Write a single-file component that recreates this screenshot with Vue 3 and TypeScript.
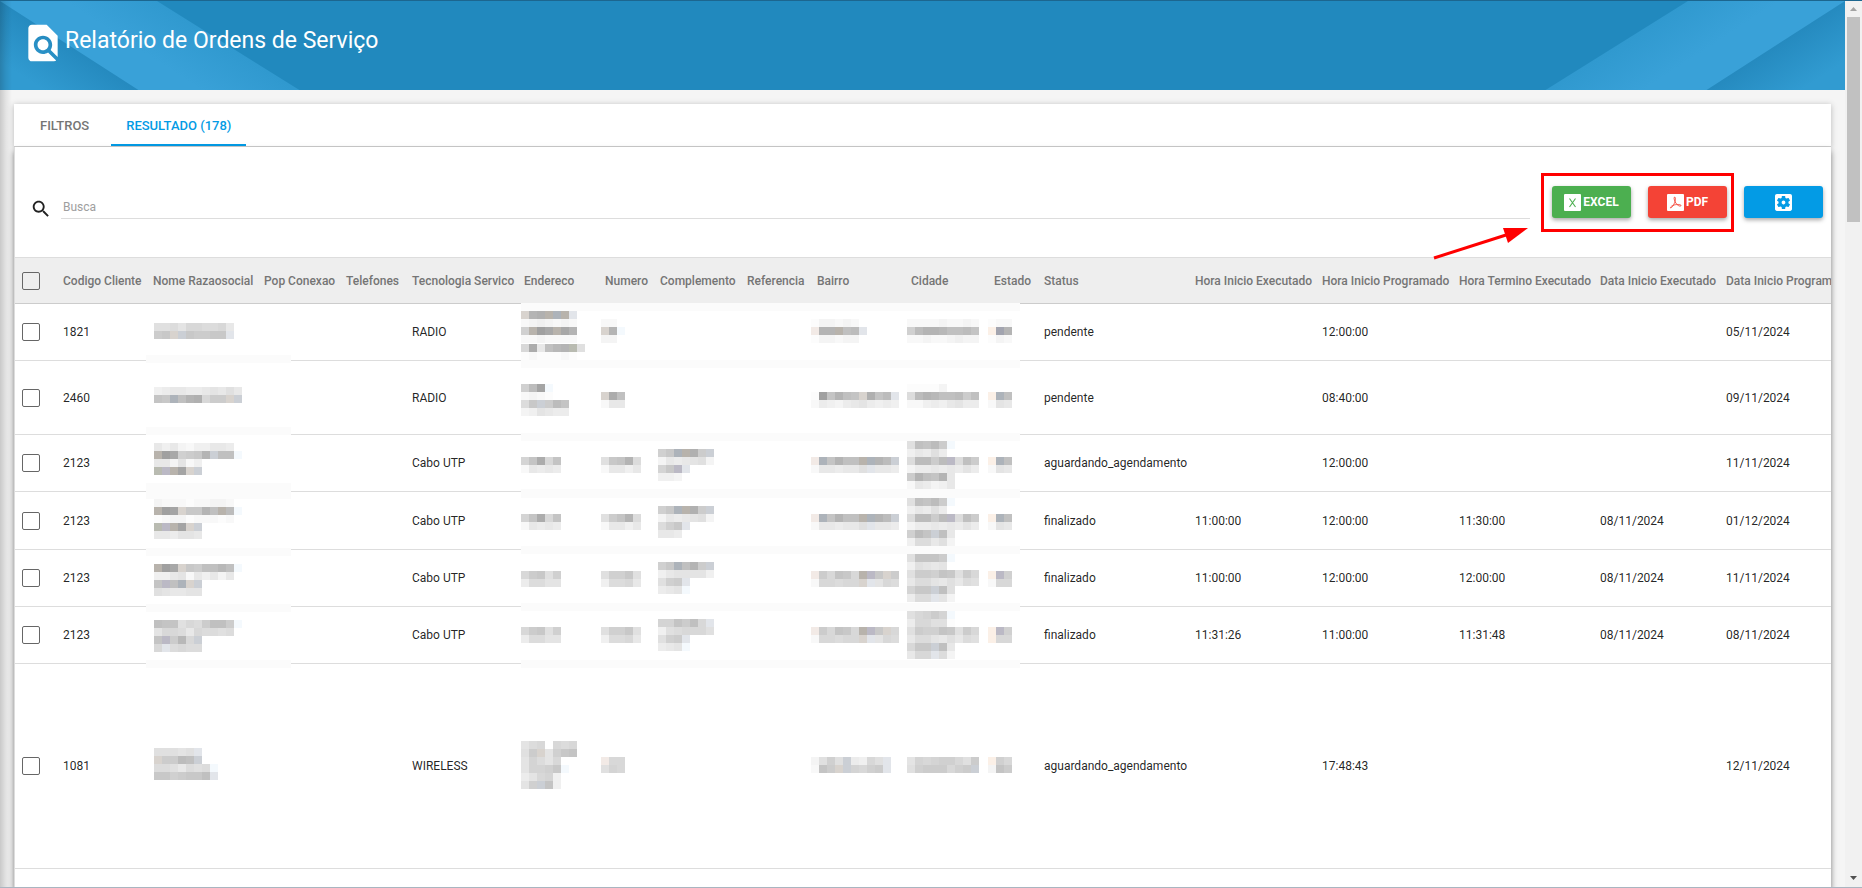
<script setup lang="ts">
import { ref } from 'vue'

interface Column { label: string; width: number }
interface Order {
  code: string
  tech: string
  status: string
  hourStart?: string
  hourPlanned: string
  hourEnd?: string
  dateStart?: string
  datePlanned: string
  size: string
}
interface Block { x: number; y: number; rows: string[] }

const tab = ref('resultado')
const query = ref('')

const columns: Column[] = [
  { label: 'Codigo Cliente', width: 90 },
  { label: 'Nome Razaosocial', width: 111 },
  { label: 'Pop Conexao', width: 82 },
  { label: 'Telefones', width: 66 },
  { label: 'Tecnologia Servico', width: 112 },
  { label: 'Endereco', width: 81 },
  { label: 'Numero', width: 55 },
  { label: 'Complemento', width: 87 },
  { label: 'Referencia', width: 70 },
  { label: 'Bairro', width: 94 },
  { label: 'Cidade', width: 83 },
  { label: 'Estado', width: 50 },
  { label: 'Status', width: 151 },
  { label: 'Hora Inicio Executado', width: 127 },
  { label: 'Hora Inicio Programado', width: 137 },
  { label: 'Hora Termino Executado', width: 141 },
  { label: 'Data Inicio Executado', width: 126 },
  { label: 'Data Inicio Programado', width: 141 },
]

const orders: Order[] = [
  { code: '1821', tech: 'RADIO', status: 'pendente', hourPlanned: '12:00:00', datePlanned: '05/11/2024', size: 'short' },
  { code: '2460', tech: 'RADIO', status: 'pendente', hourPlanned: '08:40:00', datePlanned: '09/11/2024', size: 'medium' },
  { code: '2123', tech: 'Cabo UTP', status: 'aguardando_agendamento', hourPlanned: '12:00:00', datePlanned: '11/11/2024', size: 'short' },
  { code: '2123', tech: 'Cabo UTP', status: 'finalizado', hourStart: '11:00:00', hourPlanned: '12:00:00', hourEnd: '11:30:00', dateStart: '08/11/2024', datePlanned: '01/12/2024', size: 'regular' },
  { code: '2123', tech: 'Cabo UTP', status: 'finalizado', hourStart: '11:00:00', hourPlanned: '12:00:00', hourEnd: '12:00:00', dateStart: '08/11/2024', datePlanned: '11/11/2024', size: 'short' },
  { code: '2123', tech: 'Cabo UTP', status: 'finalizado', hourStart: '11:31:26', hourPlanned: '11:00:00', hourEnd: '11:31:48', dateStart: '08/11/2024', datePlanned: '08/11/2024', size: 'short' },
  { code: '1081', tech: 'WIRELESS', status: 'aguardando_agendamento', hourPlanned: '17:48:43', datePlanned: '12/11/2024', size: 'tall' },
]

const cells = (o: Order): string[] => [
  o.code, '', '', '', o.tech, '', '', '', '', '', '', '', o.status,
  o.hourStart ?? '', o.hourPlanned, o.hourEnd ?? '', o.dateStart ?? '', o.datePlanned,
]

// Privacy mosaic: each letter is one 8px tile. Lower case runs from grey (a) to white (x);
// upper case letters are the tinted tiles.
const tints: Record<string, string> = {
  B: '#adb3ba', W: '#b8b3ac', R: '#f2eae6', L: '#f4f9fd', P: '#bbb9c5', G: '#b9bbb1',
  C: '#cbcfd5', D: '#d8d3ce', E: '#e2e5ea', F: '#fbf0e7', N: '#a2a4af',
}
const shade = (c: string): string => {
  if (tints[c]) return tints[c]
  const v = 160 + 4 * (c.charCodeAt(0) - 97)
  return `rgb(${v},${v},${v})`
}

const blocks: Block[] = [
  // Nome Razaosocial
  { x: 139, y: 66, rows: ['qqprooppos', 'lkDCkllkkE'] },
  { x: 139, y: 130, rows: ['utssttsrsqs', 'jkBifeollDC'] },
  { x: 139, y: 186, rows: ['susvwuusst', 'WacmlkfCiiL', 'ssvrwu', 'GPWbDC'] },
  { x: 139, y: 242, rows: ['vwwwxwwvvw', 'WabDkkfiWhL', 'xwvvxwwwxw', 'GPWbDC', 'sstrrs'] },
  { x: 139, y: 307, rows: ['WacDkliigiL', 'uusrwsusvs', 'jPiBDC', 'qrssrr'] },
  { x: 139, y: 363, rows: ['ijjqopliilL', 'roopsoppqp', 'jPlgoC', 'oEpopp'] },
  { x: 139, y: 491, rows: ['qqqrqE', 'DllhiC', 'ppqspqpL', 'kkmlkkiE'] },
  // Endereco
  { x: 506, y: 54, rows: ['DfeWBWE', 'wvuvwvw', 'mWacWcf', 'wwvwwww'] },
  { x: 506, y: 87, rows: ['odsigfGq', 'xwxxxwx'] },
  { x: 506, y: 127, rows: ['mhbL', 'wvwx', 'pkClhj', 'vurstt'] },
  { x: 506, y: 200, rows: ['njdoj', 'wstst'] },
  { x: 506, y: 257, rows: ['njdoj', 'wstst'] },
  { x: 506, y: 314, rows: ['olkqm', 'tpprr'] },
  { x: 506, y: 370, rows: ['olkqm', 'tpprr'] },
  { x: 506, y: 484, rows: ['rpo.opo', 'qlDrmkj', 'rnpro', 'rnnmkL', 'tronu', 'rmCju'] },
  // Numero
  { x: 586, y: 62, rows: ['ww', 'DfL', 'vv'] },
  { x: 586, y: 135, rows: ['Ddi', 'wss'] },
  { x: 586, y: 200, rows: ['qkjfp', 'wssus'] },
  { x: 586, y: 257, rows: ['qljfp', 'wssus'] },
  { x: 586, y: 314, rows: ['qmmkq', 'uppos'] },
  { x: 586, y: 370, rows: ['qmmkq', 'uppos'] },
  { x: 586, y: 500, rows: ['Roo', 'qno'] },
  // Complemento
  { x: 643, y: 192, rows: ['mkBWelC', 'vstsrqv', 'nkPE', 'uuv'] },
  { x: 643, y: 249, rows: ['mkBWelC', 'vstsrqv', 'pmkE', 'sst'] },
  { x: 643, y: 305, rows: ['mkBiflC', 'usrrrru', 'qmlE', 'tsrL'] },
  { x: 643, y: 362, rows: ['nnjlioE', 'uqpoooq', 'qmlE', 'tsrL'] },
  // Bairro
  { x: 796, y: 62, rows: ['xvvwvw', 'RffWihE', 'xvvwvv'] },
  { x: 796, y: 135, rows: ['xajfijDejhE', 'wtuvtsrtutu'] },
  { x: 796, y: 200, rows: ['RBjfiiWBfhC', 'wsstssqEsst'] },
  { x: 796, y: 257, rows: ['RBjfiiWBfhC', 'wsstssqEsst'] },
  { x: 796, y: 314, rows: ['RlojkoWPkDl', 'woopooDErop'] },
  { x: 796, y: 370, rows: ['RlojkoWPkDo', 'woopooDErop'] },
  { x: 796, y: 500, rows: ['vqmqCtuoqE', 'wjlDCnomlE'] },
  // Cidade
  { x: 892, y: 62, rows: ['wwwwvwwvw', 'mhffgiihj', 'wwvwwvuvv'] },
  { x: 892, y: 127, rows: ['xxxxv', 'phfgiihli', 'wwutusrtt'] },
  { x: 892, y: 184, rows: ['qijhlL', 'ustqt', 'phhlhPpil', 'vttststrt', 'lfijfs', 'wstvus'] },
  { x: 892, y: 241, rows: ['qijhlL', 'ustqt', 'phhlhPpil', 'vttststrt', 'mhjCis', 'uppsqv'] },
  { x: 892, y: 297, rows: ['qjjjlL', 'uqrsr', 'qllmjkqlo', 'spprsqspq', 'nkkCiq', 'tppErv'] },
  { x: 892, y: 354, rows: ['qonlnL', 'tooqqx', 'qlmmjkqlo', 'spprsqspq', 'okkCis', 'sooEpv'] },
  { x: 892, y: 500, rows: ['rnonmmoql', 'qmlllomlC'] },
  // Estado
  { x: 973, y: 62, rows: ['xww', 'FNf', 'xvw'] },
  { x: 973, y: 135, rows: ['FBi', 'wrs'] },
  { x: 973, y: 200, rows: ['FBi', 'wrs'] },
  { x: 973, y: 257, rows: ['FBi', 'wrs'] },
  { x: 973, y: 314, rows: ['FPm', 'woo'] },
  { x: 973, y: 370, rows: ['FPm', 'Foo'] },
  { x: 973, y: 500, rows: ['Fmo', 'vjl'] },
]

const veils = [
  { x: 131, y: 98, w: 145, h: 8 }, { x: 131, y: 170, w: 145, h: 8 }, { x: 131, y: 226, w: 145, h: 16 },
  { x: 131, y: 291, w: 145, h: 8 }, { x: 131, y: 347, w: 145, h: 8 }, { x: 131, y: 403, w: 145, h: 8 },
  { x: 506, y: 46, w: 499, h: 8 }, { x: 506, y: 103, w: 499, h: 8 }, { x: 506, y: 176, w: 499, h: 8 },
  { x: 506, y: 232, w: 499, h: 9 }, { x: 506, y: 289, w: 499, h: 8 }, { x: 506, y: 346, w: 499, h: 8 },
  { x: 506, y: 403, w: 499, h: 8 },
]

const tiles = blocks.flatMap((b) =>
  b.rows.flatMap((row, r) =>
    [...row].map((c, i) => ({ c, x: b.x + i * 8, y: b.y + r * 8 })).filter((t) => t.c !== '.'),
  ),
)
</script>

<template>
  <div class="window">
    <div class="page">
      <header class="banner">
        <svg class="rays rays-left" viewBox="0 0 301 90" aria-hidden="true">
          <defs>
            <linearGradient id="fold" gradientUnits="userSpaceOnUse" x1="70" y1="45" x2="42" y2="88">
              <stop offset="0" stop-color="#258abf" />
              <stop offset="1" stop-color="#319bd1" />
            </linearGradient>
            <linearGradient id="band" gradientUnits="userSpaceOnUse" x1="228" y1="45" x2="200" y2="88">
              <stop offset="0" stop-color="#3099cf" />
              <stop offset="1" stop-color="#39a1d8" />
            </linearGradient>
          </defs>
          <path d="M0 0H157L301 90H0Z" fill="url(#band)" />
          <path d="M0 0L140 90H0Z" fill="url(#fold)" />
        </svg>
        <svg class="rays rays-right" viewBox="0 0 301 90" aria-hidden="true">
          <path d="M0 0H157L301 90H0Z" fill="url(#band)" />
          <path d="M0 0L140 90H0Z" fill="url(#fold)" />
        </svg>
        <svg class="banner-icon" viewBox="0 0 24 24" aria-hidden="true">
          <path d="M20 19.59V8l-6-6H6c-1.1 0-1.99.9-1.99 2L4 20c0 1.1.89 2 1.99 2H18c.45 0 .85-.15 1.19-.4l-4.43-4.43c-.8.52-1.74.83-2.76.83-2.76 0-5-2.24-5-5s2.24-5 5-5 5 2.240 5 5c0 1.020-.31 1.960-.83 2.750L20 19.590zM9 13c0 1.660 1.340 3 3 3s3-1.340 3-3-1.340-3-3-3-3 1.340-3 3z" />
        </svg>
        <h1>Relatório de Ordens de Serviço</h1>
      </header>

      <main class="content">
        <nav class="tabs" role="tablist">
          <button type="button" role="tab" class="tab" :class="{ active: tab === 'filtros' }" @click="tab = 'filtros'">FILTROS</button>
          <button type="button" role="tab" class="tab" :class="{ active: tab === 'resultado' }" @click="tab = 'resultado'">RESULTADO (178)</button>
        </nav>

        <section class="panel">
          <div class="toolbar">
            <label class="search-label" for="busca" aria-label="Busca">
              <svg viewBox="0 0 24 24" aria-hidden="true">
                <path d="M15.500 14h-.79l-.28-.27C15.410 12.590 16 11.110 16 9.500 16 5.910 13.090 3 9.500 3S3 5.910 3 9.500 5.910 16 9.500 16c1.610 0 3.090-.59 4.230-1.570l.27.28v.79l5 4.990L20.490 19l-4.990-5zm-6 0C7.010 14 5 11.990 5 9.500S7.010 5 9.500 5 14 7.010 14 9.500 11.990 14 9.500 14z" />
              </svg>
            </label>
            <input id="busca" v-model="query" class="search" type="text" placeholder="Busca" />
            <div class="actions">
              <button type="button" class="action excel">
                <svg viewBox="0 0 17 17" aria-hidden="true">
                  <rect width="17" height="17" rx="1" fill="#fff" />
                  <path d="M5.500 4.500L11.500 13M11.500 4.500L5.500 13" fill="none" stroke="#4caf50" stroke-width="1.100" />
                </svg>
                EXCEL
              </button>
              <button type="button" class="action pdf">
                <svg viewBox="0 0 17 17" aria-hidden="true">
                  <rect width="17" height="17" rx="1" fill="#fff" />
                  <path d="M7.300 3.200C8.800 2.600 8.600 5.600 8 7.600C7.200 10.200 5 14 3.600 13.900C2.700 13.500 4.700 11.600 7.500 10.900C10.200 10.200 14 10.300 14 11.600C13.700 13 10.400 11.600 8.800 9C7.700 7.200 6.700 4.400 7.300 3.200Z" fill="none" stroke="#f44336" stroke-width="0.900" />
                </svg>
                PDF
              </button>
              <button type="button" class="action settings" aria-label="Configurações">
                <svg viewBox="3 3 18 18" aria-hidden="true">
                  <path fill="#fff" d="M12 10c-1.100 0-2 .9-2 2s.9 2 2 2 2-.9 2-2-.9-2-2-2zm7-7H5c-1.110 0-2 .9-2 2v14c0 1.100.89 2 2 2h14c1.110 0 2-.9 2-2V5c0-1.100-.89-2-2-2zm-1.750 9c0 .23-.02.46-.05.68l1.480 1.160c.13.11.17.3.08.45l-1.400 2.420c-.09.15-.27.21-.43.15l-1.740-.7c-.36.28-.76.51-1.180.69l-.26 1.850c-.03.17-.18.3-.35.3h-2.800c-.17 0-.32-.13-.35-.29l-.26-1.850c-.43-.18-.82-.41-1.180-.69l-1.740.7c-.16.06-.34 0-.43-.15l-1.400-2.420c-.09-.15-.05-.34.08-.45l1.480-1.160c-.03-.23-.05-.46-.05-.69 0-.23.02-.46.05-.68l-1.480-1.160c-.13-.11-.17-.3-.08-.45l1.400-2.420c.09-.15.27-.21.43-.15l1.740.7c.36-.28.76-.51 1.180-.69l.26-1.850c.03-.17.18-.3.35-.3h2.800c.17 0 .32.13.35.29l.26 1.850c.43.18.82.41 1.180.69l1.740-.7c.16-.06.34 0 .43.15l1.400 2.420c.09.15.05.34-.08.45l-1.480 1.160c.03.23.05.46.05.69z" />
                </svg>
              </button>
              <svg class="callout" viewBox="0 0 304 90" aria-hidden="true">
                <rect x="109.500" y="2.500" width="190" height="56" fill="none" stroke="#f00" stroke-width="3" />
                <path d="M1 86L73 63" stroke="#f00" stroke-width="3" />
                <path d="M70 56L95 56L75 71Z" fill="#f00" />
              </svg>
            </div>
          </div>

          <div class="table-area">
            <table>
              <colgroup>
                <col class="check-col" />
                <col v-for="c in columns" :key="c.label" :style="{ width: c.width + 'px' }" />
              </colgroup>
              <thead>
                <tr>
                  <th><input type="checkbox" aria-label="Selecionar todos" /></th>
                  <th v-for="c in columns" :key="c.label" scope="col">{{ c.label }}</th>
                </tr>
              </thead>
              <tbody>
                <tr v-for="(o, i) in orders" :key="i" :class="o.size">
                  <td><input type="checkbox" :aria-label="'Selecionar ' + o.code" /></td>
                  <td v-for="(value, k) in cells(o)" :key="k">{{ value }}</td>
                </tr>
              </tbody>
            </table>
            <svg class="mosaic" width="1020" height="600" shape-rendering="crispEdges" aria-hidden="true">
              <rect v-for="(v, i) in veils" :key="'v' + i" :x="v.x" :y="v.y" :width="v.w" :height="v.h" fill="#fbfbfb" />
              <rect v-for="(t, i) in tiles" :key="i" :x="t.x" :y="t.y" width="8" height="8" :fill="shade(t.c)" />
            </svg>
          </div>
        </section>
      </main>
    </div>

    <div class="scrollbar" aria-hidden="true">
      <svg viewBox="0 0 17 16"><path d="M5 10L8.500 6L12 10Z" fill="#a3a3a3" /></svg>
      <div class="thumb"></div>
      <svg viewBox="0 0 17 16"><path d="M5 5L8.500 9L12 5Z" fill="#505050" /></svg>
    </div>
  </div>
</template>

<style>
html,
body {
  margin: 0;
  overflow: hidden;
}
</style>

<style scoped>
.window {
  box-sizing: border-box;
  display: flex;
  height: 100vh;
  border-top: 1px solid #1c668f;
  border-bottom: 1px solid #a9b5c0;
  overflow: hidden;
  font-family: Roboto, sans-serif;
  font-size: 12px;
  color: rgba(0, 0, 0, 0.87);
}

.window * {
  box-sizing: border-box;
}

.page {
  position: relative;
  display: flex;
  flex: 1;
  flex-direction: column;
  min-width: 0;
  background: #f5f5f5;
}

.page::before {
  content: '';
  position: absolute;
  z-index: 2;
  inset: 0 auto 0 0;
  width: 12px;
  background: linear-gradient(90deg, rgba(0, 0, 0, 0.18), rgba(0, 0, 0, 0.07) 50%, rgba(0, 0, 0, 0));
}

.banner {
  position: relative;
  display: flex;
  flex: none;
  height: 89px;
  padding: 20px 21px;
  background: #2189be;
  color: #fff;
  overflow: hidden;
}

.rays {
  position: absolute;
  top: 0;
  width: 301px;
  height: 90px;
}

.rays-left {
  left: 0;
}

.rays-right {
  right: 0;
  transform: scaleX(-1);
}

.banner-icon {
  position: relative;
  width: 44px;
  height: 44px;
  fill: currentColor;
}

.banner h1 {
  position: relative;
  margin: 0;
  font-size: 23px;
  font-weight: 400;
  line-height: 40px;
}

.content {
  display: flex;
  flex: 1;
  flex-direction: column;
  min-height: 0;
  padding: 14px 14px 0;
}

.tabs {
  display: flex;
  flex: none;
  gap: 7px;
  height: 43px;
  padding-left: 11px;
  border-bottom: 1px solid #ccc;
  background: #fff;
  box-shadow: 0 1px 6px rgba(0, 0, 0, 0.25);
}

.tab {
  height: 42px;
  padding: 2px 15px 0;
  border: 0;
  border-bottom: 2px solid transparent;
  background: none;
  color: #757575;
  font: 500 13px Roboto, sans-serif;
}

.tab.active {
  border-bottom-color: #039be5;
  color: #039be5;
}

.panel {
  position: relative;
  flex: 1;
  min-height: 0;
  border-left: 1px solid #ddd;
  background: #fff;
  box-shadow: 0 4px 6px rgba(0, 0, 0, 0.5);
}

.toolbar {
  display: flex;
  align-items: flex-start;
  height: 110px;
  padding: 39px 8px 0 15px;
}

.search-label {
  width: 31px;
  padding-top: 12px;
}

.search-label svg {
  display: block;
  width: 22px;
  height: 22px;
  fill: #212121;
}

.search {
  flex: 1;
  min-width: 0;
  height: 33px;
  margin-right: 22px;
  padding: 10px 2px 0;
  border: 0;
  border-bottom: 1px solid #ddd;
  outline: 0;
  background: none;
  font: 12px Roboto, sans-serif;
}

.search::placeholder {
  color: #9e9e9e;
}

.actions {
  position: relative;
  display: flex;
  gap: 17px;
}

.action {
  display: flex;
  align-items: center;
  justify-content: center;
  gap: 2px;
  width: 79px;
  height: 32px;
  padding: 0;
  border: 0;
  border-radius: 3px;
  box-shadow: 0 2px 4px rgba(0, 0, 0, 0.35);
  color: #fff;
  font: 700 12px Roboto, sans-serif;
}

.action svg {
  width: 17px;
  height: 17px;
}

.excel {
  background: #4caf50;
}

.pdf {
  background: #f44336;
}

.settings {
  background: #039be5;
}

.callout {
  position: absolute;
  z-index: 1;
  top: -14px;
  left: -119px;
  width: 304px;
  height: 90px;
  pointer-events: none;
}

.table-area {
  position: relative;
  height: calc(100% - 110px);
  overflow: hidden;
}

table {
  width: 1845px;
  border-collapse: separate;
  border-spacing: 0;
  table-layout: fixed;
}

.check-col {
  width: 41px;
}

th,
td {
  padding: 0 7px;
  border-bottom: 1px solid #ddd;
  text-align: left;
  white-space: nowrap;
}

th {
  height: 47px;
  border-top: 1px solid #ddd;
  border-bottom-color: #ccc;
  background: #eee;
  color: #757575;
  font-weight: 500;
}

.short td {
  height: 57px;
}

.regular td {
  height: 58px;
}

.medium td {
  height: 74px;
}

.tall td {
  height: 205px;
}

input[type='checkbox'] {
  display: block;
  appearance: none;
  width: 18px;
  height: 18px;
  margin: 0;
  border: 1px solid #666;
  border-radius: 2px;
}

.mosaic {
  position: absolute;
  top: 0;
  left: 0;
  pointer-events: none;
}

.scrollbar {
  display: flex;
  flex: none;
  flex-direction: column;
  width: 17px;
  background: #f1f1f1;
}

.scrollbar svg {
  flex: none;
  width: 17px;
  height: 16px;
}

.thumb {
  height: 205px;
  margin: 0 2px auto;
  background: #c1c1c1;
}
</style>
